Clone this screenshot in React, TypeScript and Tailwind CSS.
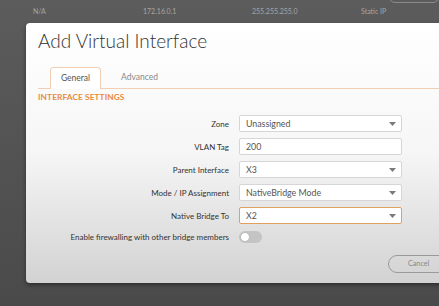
const font = { fontFamily: "Lato, 'Open Sans', sans-serif" };

function Caret() {
  return (
    <svg width="7" height="4" viewBox="0 0 7 4" className="shrink-0">
      <path d="M0 0h7L3.5 4z" fill="#7a7a7a" />
    </svg>
  );
}

function Field({
  label,
  value,
  select = true,
  active = false,
}: {
  label: string;
  value: string;
  select?: boolean;
  active?: boolean;
}) {
  return (
    <div className="flex items-center h-[17px]">
      <div className="w-[213px] text-right text-[8px] text-[#333] pr-[10px]">{label}</div>
      <div
        className={
          "w-[163px] h-[17px] flex items-center justify-between pl-[6px] pr-[5px] rounded-[2px] bg-white text-[8.8px] text-[#555] border " +
          (active ? "border-[#e0a060]" : "border-[#d6d6d6]")
        }
      >
        <span>{value}</span>
        {select && <Caret />}
      </div>
    </div>
  );
}

export default function App() {
  return (
    <div
      className="w-[439px] h-[306px] overflow-hidden relative bg-gradient-to-b from-[#5c5c5c] to-[#4a4a4a]"
      style={font}
    >
      <div className="absolute right-0 top-[-12px] w-[50px] h-[15px] rounded-[6px] border border-[#8a8a8a]" />
      <div className="h-[23px] flex items-center pl-[33px] text-[7px] text-[#a6a6a6]">
        <span className="w-[110px]">N/A</span>
        <span className="w-[109px]">172.16.0.1</span>
        <span className="w-[109px]">255.255.255.0</span>
        <span>Static IP</span>
      </div>
      <div className="ml-[26px] w-[430px] h-[260px] rounded-[4px] bg-gradient-to-b from-white via-[#f6f6f6] to-[#d2d2d2] shadow-[0_2px_4px_rgba(0,0,0,0.4)]">
        <div className="pl-[12px] pt-[4px] text-[19px] leading-[28px] text-[#333] font-light">
          Add Virtual Interface
        </div>
        <div className="ml-[12px] mt-[12px] flex items-end h-[22px] border-b border-[#f0cfb4] text-[8.5px]">
          <div className="ml-[12px] w-[51px] h-[22px] -mb-px flex items-center justify-center rounded-t-[4px] border border-b-0 border-[#f0cfb4] bg-white text-[#555]">
            General
          </div>
          <div className="ml-[20px] h-[22px] flex items-center text-[#8a8a8a]">Advanced</div>
        </div>
        <div className="ml-[12px] mt-[2px] text-[8.3px] leading-[12px] font-bold text-[#e88b3c] tracking-[0.1px]">
          INTERFACE SETTINGS
        </div>
        <div className="mt-[12px] flex flex-col gap-[6px]">
          <Field label="Zone" value="Unassigned" />
          <Field label="VLAN Tag" value="200" select={false} />
          <Field label="Parent Interface" value="X3" />
          <Field label="Mode / IP Assignment" value="NativeBridge Mode" />
          <Field label="Native Bridge To" value="X2" active />
          <div className="flex items-center h-[14px]">
            <div className="w-[213px] text-right text-[8px] text-[#333] pr-[10px]">
              Enable firewalling with other bridge members
            </div>
            <div className="w-[23px] h-[12px] rounded-full bg-[#c4c4c4] flex items-center pl-px">
              <div className="w-[10px] h-[10px] rounded-full bg-white border border-[#bbb]" />
            </div>
          </div>
        </div>
        <div className="mt-[11px] flex">
          <div className="ml-[362px] w-[80px] h-[18px] rounded-full border border-[#9a9a9a] flex items-center pl-[19px] text-[7.2px] text-[#888]">
            Cancel
          </div>
        </div>
      </div>
    </div>
  );
}
